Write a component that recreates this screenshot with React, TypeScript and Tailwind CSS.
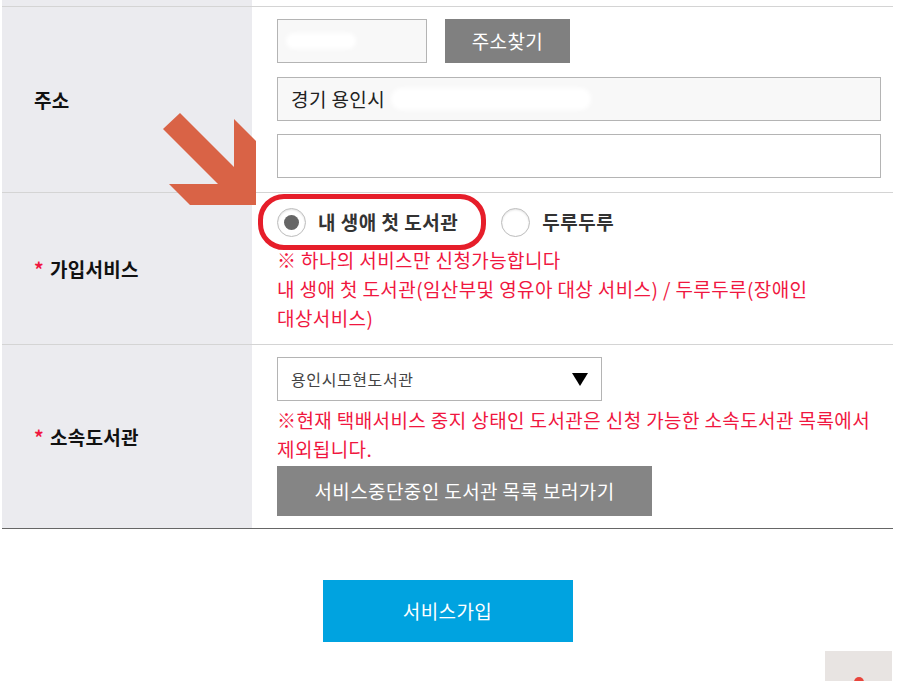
import React from "react";

const FONT = { fontFamily: '"Noto Sans CJK KR", "Noto Sans", sans-serif' };

function Radio({ checked }: { checked?: boolean }) {
  return (
    <span className="flex h-[29px] w-[29px] shrink-0 items-center justify-center rounded-full border border-[#bdbdbd] bg-white shadow-[inset_0_1px_2px_rgba(0,0,0,0.12)]">
      {checked && <span className="h-[15px] w-[15px] rounded-full bg-[#666]" />}
    </span>
  );
}

function Label({ text, required }: { text: string; required?: boolean }) {
  return (
    <div className="flex w-[250px] shrink-0 items-center bg-[#ebebef] pl-[32px]">
      <span className="text-[19px] font-bold leading-[26px] tracking-[0.3px] text-[#111]">
        {required && <span className="mr-[6px] text-[#f0173f]">*</span>}
        {text}
      </span>
    </div>
  );
}

export default function App() {
  return (
    <div style={FONT} className="relative h-[681px] w-[898px] overflow-hidden bg-white">
      <div className="ml-[2px] w-[891px]">
        {/* previous row tail */}
        <div className="flex h-[6px]">
          <div className="w-[250px] bg-[#ebebef]" />
          <div className="flex-1" />
        </div>

        {/* 주소 */}
        <div className="flex border-t border-[#d4d4d4]">
          <Label text="주소" />
          <div className="flex flex-1 flex-col gap-[14px] pb-[14px] pl-[25px] pr-[12px] pt-[12px]">
            <div className="flex gap-[18px]">
              <div className="flex h-[44px] w-[150px] items-center border border-[#b4b4b4] bg-[#f8f8f8] pl-[8px]">
                <span className="h-[16px] w-[70px] rounded-full bg-white blur-[2px]" />
              </div>
              <button className="h-[44px] w-[125px] bg-[#808080] text-[19px] leading-[26px] tracking-[0.4px] text-white">주소찾기</button>
            </div>
            <div className="flex h-[44px] items-center border border-[#b4b4b4] bg-[#f8f8f8] pl-[13px] text-[19px] leading-[26px] tracking-[0.4px] text-[#222]">
              <span>경기 용인시</span>
              <span className="ml-[6px] h-[22px] w-[200px] rounded-full bg-white blur-[2px]" />
            </div>
            <div className="-mt-px flex h-[44px] items-center border border-[#b4b4b4] bg-white pl-[10px]">
              <span className="h-[16px] w-[100px] rounded-full bg-white" />
            </div>
          </div>
        </div>

        {/* 가입서비스 */}
        <div className="flex border-t border-[#d4d4d4]">
          <Label text="가입서비스" required />
          <div className="flex flex-1 flex-col pb-[12px] pl-[25px] pr-[12px] pt-[14px]">
            <div className="flex h-[30px] items-center">
              <Radio checked />
              <span className="ml-[12px] text-[19px] font-bold leading-[26px] tracking-[0.5px] text-[#333]">내 생애 첫 도서관</span>
              <span className="ml-[43px]">
                <Radio />
              </span>
              <span className="ml-[12px] text-[19px] font-bold leading-[26px] tracking-[0.5px] text-[#333]">두루두루</span>
            </div>
            <div className="mt-[8px] whitespace-nowrap text-[19px] leading-[29px] tracking-[0.4px] text-[#f0173f]">
              <div>※ 하나의 서비스만 신청가능합니다</div>
              <div>내 생애 첫 도서관(임산부및 영유아 대상 서비스) / 두루두루(장애인</div>
              <div>대상서비스)</div>
            </div>
          </div>
        </div>

        {/* 소속도서관 */}
        <div className="flex border-b border-t border-b-[#666] border-t-[#d4d4d4]">
          <Label text="소속도서관" required />
          <div className="flex flex-1 flex-col pb-[12px] pl-[25px] pr-[12px] pt-[12px]">
            <div className="flex h-[44px] w-[325px] items-center justify-between border border-[#b4b4b4] bg-white pl-[13px] pr-[13px]">
              <span className="text-[16px] leading-[22px] tracking-[0.6px] text-[#444]">용인시모현도서관</span>
              <svg width="16" height="13" viewBox="0 0 16 13">
                <polygon points="0,0 16,0 8,13" fill="#000" />
              </svg>
            </div>
            <div className="mt-[4px] whitespace-nowrap text-[19px] leading-[29px] tracking-[0.4px] text-[#f0173f]">
              <div>※현재 택배서비스 중지 상태인 도서관은 신청 가능한 소속도서관 목록에서</div>
              <div>제외됩니다.</div>
            </div>
            <button className="mt-[3px] h-[50px] w-[375px] bg-[#858585] text-[19px] leading-[26px] tracking-[0.4px] text-white">
              서비스중단중인 도서관 목록 보러가기
            </button>
          </div>
        </div>

        <div className="mt-[51px] flex justify-center">
          <button className="h-[62px] w-[250px] bg-[#00a3e0] text-[19px] leading-[26px] tracking-[0.4px] text-white">서비스가입</button>
        </div>
      </div>

      {/* annotation arrow */}
      <svg className="absolute left-0 top-0" width="898" height="681" viewBox="0 0 898 681" style={{ pointerEvents: "none" }}>
        <polygon
          points="163,129 180,113 234,167 234,119 256,141 256,205 190,205 169,184 218,184"
          fill="#d96346"
        />
      </svg>

      {/* annotation highlight */}
      <div className="pointer-events-none absolute left-[258px] top-[194px] h-[56px] w-[228px] rounded-[26px] border-[5px] border-[#e61e2a]" />

      {/* floating scroll-top */}
      <div className="absolute left-[825px] top-[651px] flex h-[40px] w-[67px] justify-center bg-[#e8e4e2]">
        <span className="mt-[26px] h-[8px] w-[10px] rounded-t-full bg-[#e8453c]" />
      </div>
    </div>
  );
}
